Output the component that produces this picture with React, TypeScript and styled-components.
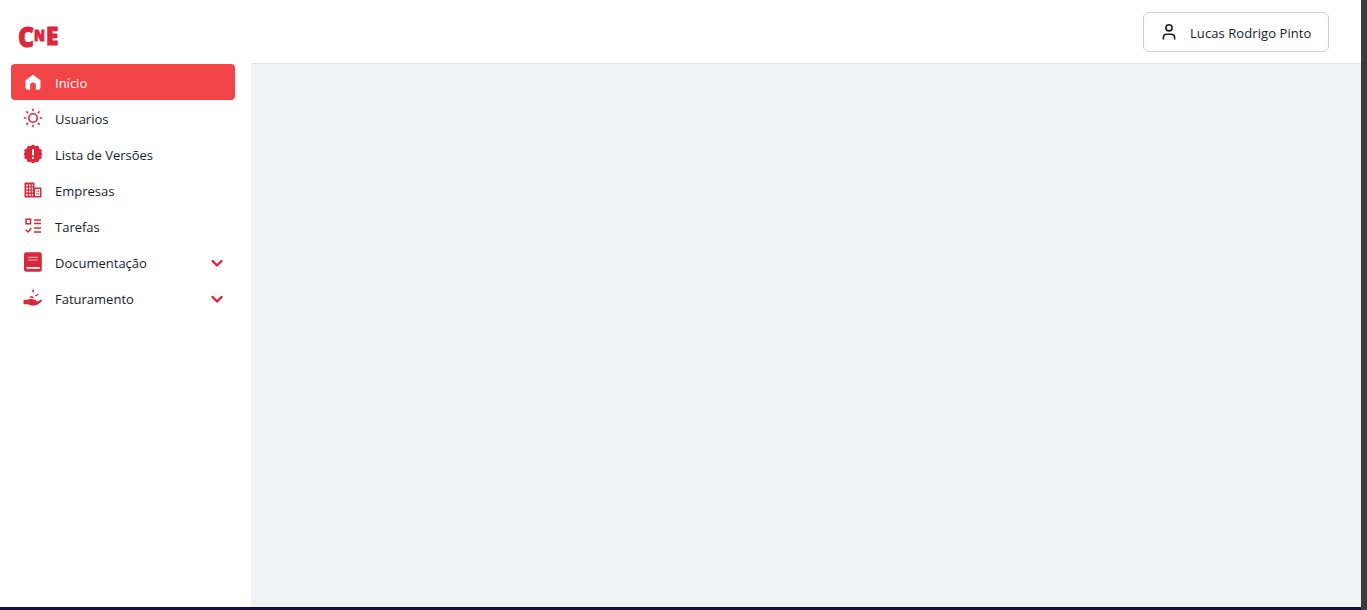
import { ReactNode } from 'react';
import styled, { createGlobalStyle } from 'styled-components';

const GlobalStyle = createGlobalStyle`
  html, body {
    margin: 0;
    padding: 0;
    height: 100%;
    overflow: hidden;
  }
  #root {
    height: 100%;
  }
`;

const Window = styled.div`
  display: flex;
  width: 100%;
  height: 100vh;
  font-family: "Open Sans", "Noto Sans", Arial, sans-serif;
`;

const ScrollEdge = styled.div`
  width: 6px;
  background-color: #3b3b3b;
`;

const Frame = styled.div`
  flex: 1;
  display: flex;
  flex-direction: column;
  min-width: 0;
`;

const BottomEdge = styled.div`
  height: 3px;
  background-color: #17103f;
`;

const Shell = styled.div`
  flex: 1;
  display: flex;
  min-height: 0;
`;

const Sidebar = styled.aside`
  width: 251px;
  flex-shrink: 0;
  background-color: #ffffff;
`;

const LogoRow = styled.div`
  height: 64px;
  box-sizing: border-box;
  padding: 20px 0 0 18px;
`;

const Logo = styled.div`
  display: flex;
  align-items: center;
  height: 30px;
  color: #d9283a;
  font-family: "Open Sans", Arial, sans-serif;
  font-weight: 800;
  line-height: 1;
`;

const LogoLetter = styled.span<{ $size: number; $width: number; $scale: number }>`
  display: inline-block;
  width: ${(p) => p.$width}px;
  font-size: ${(p) => p.$size}px;
  transform: scaleX(${(p) => p.$scale});
  transform-origin: left center;
  -webkit-text-stroke: 1px #d9283a;
`;

const Nav = styled.nav`
  display: flex;
  flex-direction: column;
  padding: 0 16px 0 11px;
`;

const NavItem = styled.div<{ $active?: boolean }>`
  height: 36px;
  box-sizing: border-box;
  display: flex;
  align-items: center;
  padding: 0 12px;
  border-radius: 4px;
  background-color: ${(p) => (p.$active ? '#f14446' : 'transparent')};
  color: ${(p) => (p.$active ? '#ffffff' : '#161c2b')};
  font-size: 13px;
`;

const IconSlot = styled.span<{ $active?: boolean }>`
  width: 20px;
  height: 20px;
  margin-right: 12px;
  display: flex;
  align-items: center;
  justify-content: center;
  color: ${(p) => (p.$active ? '#ffffff' : '#d9283a')};
`;

const ItemLabel = styled.span`
  flex: 1;
  padding-top: 2px;
  white-space: nowrap;
`;

const Chevron = styled.svg`
  width: 14px;
  height: 14px;
  margin: 2px -1px 0 0;
  fill: none;
  stroke: #e01f3d;
  stroke-width: 2.4;
  stroke-linecap: round;
  stroke-linejoin: round;
`;

const Content = styled.div`
  flex: 1;
  display: flex;
  flex-direction: column;
  min-width: 0;
`;

const Header = styled.header`
  height: 64px;
  box-sizing: border-box;
  display: flex;
  justify-content: flex-end;
  padding: 12px 32px 0 0;
  background-color: #ffffff;
  border-bottom: 1px solid #e4e6ec;
`;

const UserButton = styled.button`
  width: 186px;
  height: 40px;
  box-sizing: border-box;
  display: flex;
  align-items: center;
  gap: 11px;
  padding: 0 0 0 15px;
  background-color: #ffffff;
  border: 1px solid #cfd0d4;
  border-radius: 6px;
  color: #141b2b;
  font-family: inherit;
  font-size: 13px;
  white-space: nowrap;
`;

const UserName = styled.span`
  padding-top: 2px;
  letter-spacing: 0.08px;
`;

const Main = styled.main`
  flex: 1;
  background-color: #f0f2f6;
`;

const HomeIcon = () => (
  <svg width="16" height="16" viewBox="0 0 18 18" fill="currentColor">
    <path d="M9 .8 L16.6 6.6 Q17.4 7.2 17.4 8.2 V15.6 Q17.4 17.6 15.4 17.6 H12.2 V12.6 Q12.2 9.6 9 9.6 Q5.8 9.6 5.8 12.6 V17.6 H2.6 Q.6 17.6 .6 15.6 V8.2 Q.6 7.2 1.4 6.6 Z" />
  </svg>
);

const SunIcon = () => (
  <svg width="20" height="20" viewBox="0 0 20 20" fill="none" stroke="currentColor" strokeWidth="1.6" strokeLinecap="round">
    <circle cx="10" cy="10" r="4.2" />
    <path d="M10 1.4v1.2M10 17.4v1.2M1.4 10h1.2M17.4 10h1.2M3.9 3.9l.8.8M15.3 15.3l.8.8M3.9 16.1l.8-.8M15.3 4.7l.8-.8" />
  </svg>
);

const SealIcon = () => (
  <svg width="20" height="20" viewBox="0 0 20 20">
    <path
      fill="currentColor"
      d="M10 .6l2.4 1.5 2.8-.3 1.1 2.6 2.5 1.3-.5 2.8L19.4 10l-1.1 1.5.5 2.8-2.5 1.3-1.1 2.6-2.8-.3L10 19.4l-2.4-1.5-2.8.3-1.1-2.6-2.5-1.3.5-2.8L.6 10l1.1-1.5-.5-2.8 2.5-1.3 1.1-2.6 2.8.3z"
    />
    <rect x="9" y="5" width="2" height="6.6" rx="0.8" fill="#ffffff" />
    <rect x="9" y="13" width="2" height="2" rx="0.8" fill="#ffffff" />
  </svg>
);

const BuildingIcon = () => (
  <svg width="20" height="20" viewBox="0 0 20 20" fill="currentColor">
    <path
      fillRule="evenodd"
      d="M1.5 2.5h10v5h7v10h-17zM3.2 4.4v1.8h1.6V4.4zM6 4.4v1.8h1.6V4.4zM8.8 4.4v1.8h1.2V4.4zM3.2 7.6v1.8h1.6V7.6zM6 7.6v1.8h1.6V7.6zM8.8 7.6v1.8h1.2V7.6zM3.2 10.8v1.8h1.6v-1.8zM6 10.8v1.8h1.6v-1.8zM8.8 10.8v1.8h1.2v-1.8zM3.2 14v1.8h1.6V14zM6 14v1.8h1.6V14zM8.8 14v1.8h1.2V14zM12 9v7h5V9zM13.4 10.6h.9v1.4h-.9zM15 10.6h.9v1.4H15zM13.4 13h.9v1.4h-.9zM15 13h.9v1.4H15z"
    />
  </svg>
);

const TasksIcon = () => (
  <svg width="20" height="20" viewBox="0 0 20 20" fill="none" stroke="currentColor" strokeWidth="1.5">
    <rect x="3" y="3.2" width="4.6" height="4.6" />
    <path d="M11 4h7M11 7.5h7M11 12h7M11 16h7" />
    <path d="M3 14l2 2 3-3.4" strokeLinecap="round" strokeLinejoin="round" />
  </svg>
);

const BookIcon = () => (
  <svg width="20" height="20" viewBox="0 0 20 20">
    <path fill="currentColor" d="M3.2 0.2h13.4q2.2 0 2.2 2.2v15.2q0 2.2-2.2 2.2H3.2q-2.2 0-2.2-2.2V2.4q0-2.2 2.2-2.2z" />
    <path fill="#ffffff" d="M3.6 15h13.2v1.8H3.6z" />
    <path fill="#ffffff" d="M5.2 4.8h9.6v1.2H5.2zM5.2 7.4h9.6v1.2H5.2z" opacity="0.6" />
  </svg>
);

const HandCoinIcon = () => (
  <svg width="22" height="20" viewBox="0 0 22 20" fill="currentColor">
    <path d="M10.8 0l1.4 1.4-.2 2.2-1.2.4-.8-1.8z" />
    <path d="M13.6 6.6l3.2-1.4.6.8-2.6 2-1.4-.2z" />
    <path d="M7.2 8.4q2-.8 3.8 0l1 1-1.6.8-2.4-.4z" />
    <path d="M.6 12h4q2.4-1.4 5-.8l4 .8q1.6.4.8 1.6l-3.4.2 5.4-.2 3.6-1.6q1.4-.2 1.2 1l-4 3.6q-2 1.6-4.4 1.6H9.4q-2.4 0-3.8-1.2H.6z" />
  </svg>
);

const UserIcon = () => (
  <svg width="20" height="20" viewBox="0 0 20 20" fill="none" stroke="#1c1c1c" strokeWidth="1.6" strokeLinecap="round">
    <circle cx="10" cy="5.8" r="3.1" />
    <path d="M4.4 17v-1.4q0-3.4 3.4-3.4h4.4q3.4 0 3.4 3.4V17" />
  </svg>
);

const DownArrow = () => (
  <Chevron viewBox="0 0 14 14">
    <path d="M2.5 5l4.5 4.5L11.5 5" />
  </Chevron>
);

interface MenuEntry {
  label: string;
  icon: ReactNode;
  active?: boolean;
  expandable?: boolean;
}

const menu: MenuEntry[] = [
  { label: 'Início', icon: <HomeIcon />, active: true },
  { label: 'Usuarios', icon: <SunIcon /> },
  { label: 'Lista de Versões', icon: <SealIcon /> },
  { label: 'Empresas', icon: <BuildingIcon /> },
  { label: 'Tarefas', icon: <TasksIcon /> },
  { label: 'Documentação', icon: <BookIcon />, expandable: true },
  { label: 'Faturamento', icon: <HandCoinIcon />, expandable: true },
];

export default function App() {
  return (
    <>
      <GlobalStyle />
      <Window>
        <Frame>
          <Shell>
            <Sidebar>
              <LogoRow>
                <Logo>
                  <LogoLetter $size={29} $width={16} $scale={0.85}>C</LogoLetter>
                  <LogoLetter $size={16} $width={12} $scale={0.82}>N</LogoLetter>
                  <LogoLetter $size={25} $width={13} $scale={0.9}>E</LogoLetter>
                </Logo>
              </LogoRow>
              <Nav>
                {menu.map((item) => (
                  <NavItem key={item.label} $active={item.active}>
                    <IconSlot $active={item.active}>{item.icon}</IconSlot>
                    <ItemLabel>{item.label}</ItemLabel>
                    {item.expandable && <DownArrow />}
                  </NavItem>
                ))}
              </Nav>
            </Sidebar>
            <Content>
              <Header>
                <UserButton>
                  <UserIcon />
                  <UserName>Lucas Rodrigo Pinto</UserName>
                </UserButton>
              </Header>
              <Main />
            </Content>
          </Shell>
          <BottomEdge />
        </Frame>
        <ScrollEdge />
      </Window>
    </>
  );
}
